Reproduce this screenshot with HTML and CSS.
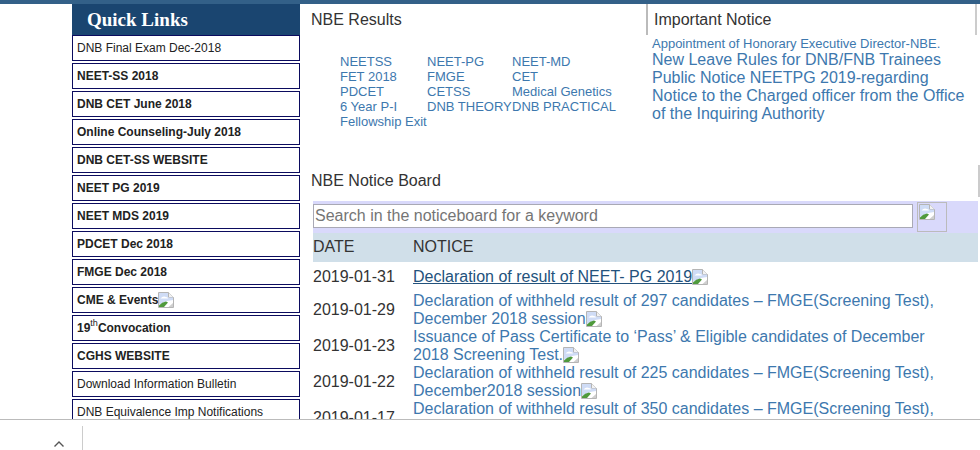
FILE: index.html
```
<!DOCTYPE html>
<html lang="en">
<head>
<meta charset="utf-8">
<title>NBE</title>
<link rel="stylesheet" href="styles.css">
</head>
<body>
<svg class="defs" width="0" height="0" aria-hidden="true">
  <symbol id="broken" viewBox="0 0 16 16">
    <path d="M0.5 0.5H10.5L15.5 5.5V15.5H0.5Z" fill="#fff" stroke="#b5b5b5"/>
    <path d="M10.5 0.5V5.5H15.5" fill="#f2f2f2" stroke="#b5b5b5"/>
    <path d="M1 1H10V5.5H15V8L9 9L1 13Z" fill="#cfdcf6"/>
    <path d="M2.5 6.5Q5 3.5 8 5Q10 5 10 6.5Z" fill="#fff"/>
    <path d="M1 15V13.5Q4 10 8 9.5L10 10.5L6 15Z" fill="#4f9a3c"/>
    <path d="M10.5 15L15 11V15Z" fill="#cfcfcf"/>
  </symbol>
</svg>
<div class="page">
  <div class="main">
    <aside class="side">
      <h2 class="side-title">Quick Links</h2>
      <a class="side-item">DNB Final Exam Dec-2018</a>
      <a class="side-item strong">NEET-SS 2018</a>
      <a class="side-item strong">DNB CET June 2018</a>
      <a class="side-item strong">Online Counseling-July 2018</a>
      <a class="side-item strong">DNB CET-SS WEBSITE</a>
      <a class="side-item strong">NEET PG 2019</a>
      <a class="side-item strong">NEET MDS 2019</a>
      <a class="side-item strong">PDCET Dec 2018</a>
      <a class="side-item strong">FMGE Dec 2018</a>
      <a class="side-item strong">CME &amp; Events<svg class="ico"><use href="#broken"/></svg></a>
      <a class="side-item strong">19<sup>th</sup>Convocation</a>
      <a class="side-item strong">CGHS WEBSITE</a>
      <a class="side-item">Download Information Bulletin</a>
      <a class="side-item">DNB Equivalence Imp Notifications</a>
    </aside>
    <section class="content">
      <div class="top">
        <div class="results">
          <h3 class="head">NBE Results</h3>
          <div class="result-grid">
            <a>NEETSS</a><a>NEET-PG</a><a>NEET-MD</a>
            <a>FET 2018</a><a>FMGE</a><a>CET</a>
            <a>PDCET</a><a>CETSS</a><a>Medical Genetics</a>
            <a>6 Year P-I</a><a>DNB THEORY</a><a>DNB PRACTICAL</a>
            <a>Fellowship Exit</a>
          </div>
        </div>
        <div class="notice">
          <h3 class="head notice-head">Important Notice</h3>
          <div class="notice-links">
            <a class="small">Appointment of Honorary Executive Director-NBE.</a>
            <a>New Leave Rules for DNB/FNB Trainees</a>
            <a>Public Notice NEETPG 2019-regarding</a>
            <a>Notice to the Charged officer from the Office of the Inquiring Authority</a>
          </div>
        </div>
      </div>
      <div class="board">
        <h3 class="board-head">NBE Notice Board</h3>
        <form class="search">
          <input class="search-input" type="text" placeholder="Search in the noticeboard for a keyword">
          <button class="search-btn" type="button"><svg class="ico"><use href="#broken"/></svg></button>
        </form>
        <div class="row table-head"><span class="date">DATE</span><span>NOTICE</span></div>
        <div class="row first"><span class="date">2019-01-31</span><a class="active">Declaration of result of NEET- PG 2019<svg class="ico"><use href="#broken"/></svg></a></div>
        <div class="row"><span class="date">2019-01-29</span><a>Declaration of withheld result of 297 candidates – FMGE(Screening Test), December 2018 session<svg class="ico"><use href="#broken"/></svg></a></div>
        <div class="row"><span class="date">2019-01-23</span><a>Issuance of Pass Certificate to ‘Pass’ &amp; Eligible candidates of December 2018 Screening Test.<svg class="ico"><use href="#broken"/></svg></a></div>
        <div class="row"><span class="date">2019-01-22</span><a>Declaration of withheld result of 225 candidates – FMGE(Screening Test), December2018 session<svg class="ico"><use href="#broken"/></svg></a></div>
        <div class="row"><span class="date">2019-01-17</span><a>Declaration of withheld result of 350 candidates – FMGE(Screening Test), December 2018 session<svg class="ico"><use href="#broken"/></svg></a></div>
      </div>
    </section>
  </div>
  <footer class="bar">
    <svg class="chev" width="12" height="8" viewBox="0 0 12 8"><path d="M1.5 6.5L6 2L10.5 6.5" fill="none" stroke="#555" stroke-width="1.4"/></svg>
    <span class="divider"></span>
  </footer>
</div>
</body>
</html>
```
FILE: styles.css
```
* { box-sizing: border-box; }
html, body { margin: 0; padding: 0; }
body { font-family: "Liberation Sans", Arial, sans-serif; color: #333; background: #fff; }
.defs { position: absolute; }
.page { width: 980px; height: 450px; overflow: hidden; display: flex; flex-direction: column; }
.main { height: 420px; flex: none; overflow: hidden; display: flex; border-top: 4px solid #336088; padding-left: 72px; }
.side { width: 228px; flex: none; }
.side-title { margin: 0; height: 31px; background: #1a4570; color: #fff; font: bold 19px/32px "Liberation Serif", serif; padding-left: 15px; }
.side-item { display: flex; align-items: center; height: 26px; margin-bottom: 2px; border: 1px solid #0b0b5e; padding-left: 4px; font-size: 12px; color: #222; background: #fff; white-space: nowrap; }
.side-item.strong { font-weight: bold; }
.side-item sup { font-size: 9px; font-weight: normal; line-height: 1; align-self: flex-start; margin-top: 3px; }
.ico { width: 16px; height: 16px; vertical-align: -3px; flex: none; }
.content { flex: 1; min-width: 0; }
.top { display: flex; height: 161px; }
.results { width: 346px; flex: none; }
.head { margin: 0; height: 31px; font: 16px/31px "Liberation Sans", sans-serif; color: #333; padding-left: 11px; }
.result-grid { display: grid; grid-template-columns: 87px 85px auto; justify-content: start; padding: 19px 0 0 40px; font-size: 13px; line-height: 15px; white-space: nowrap; }
a { color: #337ab7; }
.result-grid a, .notice-links a, .row a { color: #3d78ae; }
.notice { width: 331px; flex: none; }
.notice-head { border-left: 2px solid #bbb; border-right: 2px solid #ccc; padding-left: 6px; }
.notice-links { padding: 1px 8px 0 6px; font-size: 16px; line-height: 18px; }
.notice-links a { display: block; }
.notice-links .small { font-size: 13px; line-height: 15px; }
.board { padding-left: 13px; }
.board-head { margin: 0 0 4px -2px; height: 32px; font: 16px/32px "Liberation Sans", sans-serif; color: #333; border-right: 2px solid #ccc; }
.search { display: flex; align-items: flex-start; gap: 4px; height: 32px; width: 665px; background: #d9d9fb; padding-top: 3px; }
.search-input { width: 600px; height: 24px; flex: none; border: 1px solid #a9a9b5; padding: 0 1px; font: 16px "Liberation Sans", sans-serif; background: #fff; color: #333; outline: 0; }
.search-input::placeholder { color: #757575; opacity: 1; }
.search-btn { width: 30px; height: 30px; margin-top: -2px; border: 1px solid #bbb; background: #d9d9fb; padding: 1px 0 0 1px; display: flex; align-items: flex-start; }
.row { display: flex; align-items: center; width: 665px; font-size: 16px; line-height: 18px; }
.date { width: 100px; flex: none; }
.row a { flex: 1; padding-right: 30px; }
.table-head { height: 29px; background: #d0dfe9; padding-bottom: 2px; }
.row.first { height: 30px; }
.row:not(.table-head):not(.first) { height: 36px; }
.row a.active { color: #23527c; text-decoration: underline; }
.bar { height: 30px; flex: none; border-top: 1px solid #bbb; background: #fff; display: flex; align-items: flex-start; padding-left: 53px; margin-top: -1px; position: relative; }
.chev { margin-top: 20px; }
.divider { width: 1px; height: 24px; background: #ccc; margin: 6px 0 0 17px; }
```
